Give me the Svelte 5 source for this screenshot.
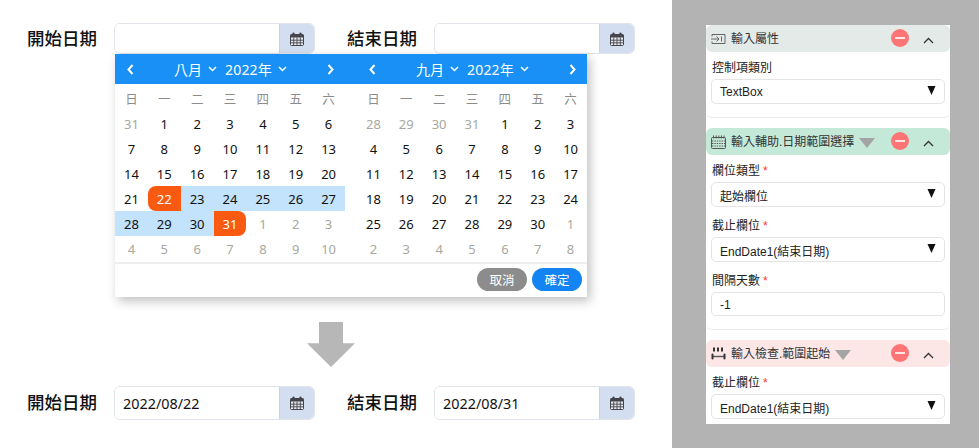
<script lang="ts">
  const weekdays = ['日', '一', '二', '三', '四', '五', '六'];

  // off = days from neighbouring months, start/end = picked range ends, range = between them
  function buildMonth(prevLast: number, lead: number, length: number, picks: Record<number, string> = {}) {
    const cells = [];
    for (let i = lead - 1; i >= 0; i--) cells.push({ day: prevLast - i, state: 'off' });
    for (let d = 1; d <= length; d++) cells.push({ day: d, state: picks[d] ?? '' });
    let next = 1;
    while (cells.length < 42) cells.push({ day: next++, state: 'off' });
    return cells;
  }

  const augPicks: Record<number, string> = { 22: 'start', 31: 'end' };
  for (let d = 23; d < 31; d++) augPicks[d] = 'range';

  const months = [
    { name: '八月', cells: buildMonth(31, 1, 31, augPicks) },
    { name: '九月', cells: buildMonth(31, 4, 30) }
  ];

  const sections = [
    {
      title: '輸入屬性',
      tone: 'grey',
      icon: 'input',
      fields: [{ label: '控制項類別', value: 'TextBox', kind: 'select' }]
    },
    {
      title: '輸入輔助.日期範圍選擇',
      tone: 'green',
      icon: 'calendar',
      filter: true,
      fields: [
        { label: '欄位類型', value: '起始欄位', kind: 'select', required: true },
        { label: '截止欄位', value: 'EndDate1(結束日期)', kind: 'select', required: true },
        { label: '間隔天數', value: '-1', kind: 'input', required: true }
      ]
    },
    {
      title: '輸入檢查.範圍起始',
      tone: 'pink',
      icon: 'check',
      filter: true,
      fields: [{ label: '截止欄位', value: 'EndDate1(結束日期)', kind: 'select', required: true }]
    }
  ];
</script>

{#snippet calIcon()}
  <svg viewBox="0 0 14 14" width="14" height="14" aria-hidden="true">
    <rect x="0.5" y="2.5" width="13" height="11" rx="1" fill="#e4eaf4" stroke="#45454a" />
    <rect x="0.5" y="2.5" width="13" height="3" fill="#45454a" />
    <rect x="2.5" y="0.5" width="2" height="3.5" rx="0.8" fill="#45454a" />
    <rect x="9.5" y="0.5" width="2" height="3.5" rx="0.8" fill="#45454a" />
    <path d="M1 8.2h12M1 10.8h12M3.7 5.5v8M7 5.5v8M10.3 5.5v8" stroke="#45454a" stroke-width="0.9" fill="none" />
  </svg>
{/snippet}

{#snippet dateField(value)}
  <div class="date">
    <input class="date__input" type="text" readonly {value} />
    <span class="date__addon">{@render calIcon()}</span>
  </div>
{/snippet}

{#snippet chevron()}
  <svg viewBox="0 0 9 6" width="9" height="6" fill="none" stroke="#fff" stroke-width="1.5" aria-hidden="true">
    <polyline points="1 1 4.5 4.5 8 1" />
  </svg>
{/snippet}

<div class="page">
  <div class="demo">
    <div class="row row--top">
      <span class="row__label">開始日期</span>
      {@render dateField('')}
      <span class="row__label row__label--end">結束日期</span>
      {@render dateField('')}
    </div>

    <div class="picker">
      <div class="picker__months">
        {#each months as month}
          <div class="month">
            <div class="month__head">
              <svg viewBox="0 0 7 11" width="7" height="11" fill="none" stroke="#fff" stroke-width="2" aria-hidden="true">
                <polyline points="5.5 1 1.5 5.5 5.5 10" />
              </svg>
              <div class="month__title">
                <span>{month.name}</span>{@render chevron()}
                <span class="month__year">2022年</span>{@render chevron()}
              </div>
              <svg viewBox="0 0 7 11" width="7" height="11" fill="none" stroke="#fff" stroke-width="2" aria-hidden="true">
                <polyline points="1.5 1 5.5 5.5 1.5 10" />
              </svg>
            </div>
            <div class="month__grid">
              {#each weekdays as w}
                <span class="cell cell--week">{w}</span>
              {/each}
              {#each month.cells as c}
                <span class="cell {c.state ? 'cell--' + c.state : ''}">{c.day}</span>
              {/each}
            </div>
          </div>
        {/each}
      </div>
      <div class="picker__foot">
        <button class="pill pill--cancel" type="button">取消</button>
        <button class="pill pill--ok" type="button">確定</button>
      </div>
    </div>

    <div class="arrow" aria-hidden="true"></div>

    <div class="row">
      <span class="row__label">開始日期</span>
      {@render dateField('2022/08/22')}
      <span class="row__label row__label--end">結束日期</span>
      {@render dateField('2022/08/31')}
    </div>
  </div>

  <div class="side">
    <div class="panel">
      {#each sections as s}
        <section class="card">
          <header class="card__head card__head--{s.tone}">
            <span class="card__icon">
              {#if s.icon === 'input'}
                <svg viewBox="0 0 15 12" width="15" height="12" fill="none" stroke="#666" stroke-width="1" aria-hidden="true">
                  <path d="M1 3.5V1.5h13v9H1V8.5" />
                  <path d="M0 6h8M5.5 3.5 8 6 5.5 8.5" />
                  <path d="M10.5 3.5v5" />
                </svg>
              {:else if s.icon === 'calendar'}
                <svg viewBox="0 0 15 14" width="15" height="14" fill="none" stroke="#555" stroke-width="1" aria-hidden="true">
                  <path d="M2.5 0.5v3M5.2 0.5v3M7.8 0.5v3M10.4 0.5v3M13 0.5v3" />
                  <rect x="0.5" y="2.5" width="14" height="11" rx="1" />
                  <path d="M1 6h13M1 8.5h13M1 11h13" stroke-dasharray="1.4 1" />
                </svg>
              {:else}
                <svg viewBox="0 0 15 13" width="15" height="13" fill="none" stroke="#333" stroke-width="2" aria-hidden="true">
                  <path d="M3 0.5v4M7 0.5v4M11 0.5v4" />
                  <path d="M2 9.5h11" stroke-width="1.4" stroke="#555" />
                  <path d="M1.5 7.5v4M13.5 7.5v4" stroke-linecap="round" />
                </svg>
              {/if}
            </span>
            <span class="card__title">{s.title}</span>
            {#if s.filter}
              <svg class="card__filter" viewBox="0 0 16 10" width="16" height="10" aria-hidden="true">
                <polygon points="0 0 16 0 8 10" fill="#a4a4a4" />
              </svg>
            {/if}
            <span class="card__remove" aria-hidden="true"></span>
            <svg class="card__fold" viewBox="0 0 11 7" width="11" height="7" fill="none" stroke="#333" stroke-width="1.3" aria-hidden="true">
              <polyline points="1 6 5.5 1.5 10 6" />
            </svg>
          </header>
          <div class="card__body">
            {#each s.fields as f}
              <div class="field">
                <div class="field__label">{f.label}{#if f.required}<span class="field__req">*</span>{/if}</div>
                <div class="field__control" class:field__control--input={f.kind === 'input'}>
                  <span>{f.value}</span>
                  {#if f.kind === 'select'}
                    <svg viewBox="0 0 8 9" width="9" height="9" aria-hidden="true">
                      <polygon points="0 0 8 0 4 9" fill="#111" />
                    </svg>
                  {/if}
                </div>
              </div>
            {/each}
          </div>
        </section>
      {/each}
    </div>
  </div>
</div>

<style>
  :global(body) {
    margin: 0;
    background: #fff;
  }

  .page {
    display: flex;
    width: 979px;
    height: 448px;
    overflow: hidden;
    font-family: "Noto Sans", "Noto Sans CJK TC", sans-serif;
    color: #111;
  }

  /* left: date picker demo */
  .demo {
    position: relative;
    width: 672px;
    flex-shrink: 0;
    padding: 23px 0 0 27px;
    box-sizing: border-box;
  }

  .row {
    display: flex;
    align-items: center;
    height: 34px;
  }

  .row--top {
    height: 31px;
  }

  .row--top .date {
    height: 31px;
  }

  .row__label {
    width: 87px;
    font-size: 17.5px;
    font-weight: 500;
    line-height: 28px;
    margin-top: -2px;
  }

  .row__label--end {
    margin-left: 32px;
  }

  .date {
    display: flex;
    width: 201px;
    height: 34px;
    box-sizing: border-box;
    border: 1px solid #e1e4ea;
    border-radius: 6px;
    overflow: hidden;
  }

  .date__input {
    flex: 1;
    min-width: 0;
    border: 0;
    outline: 0;
    padding: 0 0 0 8px;
    font-family: inherit;
    font-size: 14.4px;
    color: #111;
    background: #fff;
  }

  .date__addon {
    display: flex;
    align-items: center;
    justify-content: center;
    width: 35px;
    background: #d3dff0;
    border-left: 1px solid #c8d3e4;
    box-sizing: border-box;
  }

  .picker {
    position: absolute;
    left: 115px;
    top: 54px;
    width: 472px;
    height: 243px;
    background: #fff;
    box-shadow: 3px 4px 10px rgba(0, 0, 0, 0.25);
    display: flex;
    flex-direction: column;
  }

  .picker__months {
    display: flex;
    gap: 12px;
    background: linear-gradient(#1890f5 30px, transparent 30px);
  }

  .month {
    width: 230px;
  }

  .month__head {
    display: flex;
    align-items: center;
    justify-content: space-between;
    height: 30px;
    padding: 0 11px 0 12px;
    color: #fff;
    font-size: 14px;
  }

  .month__title {
    display: flex;
    align-items: center;
    gap: 6px;
  }

  .month__year {
    margin-left: 2px;
    letter-spacing: 0.2px;
  }

  .month__grid {
    display: grid;
    grid-template-columns: repeat(7, 1fr);
    grid-auto-rows: 25px;
    padding-top: 2px;
  }

  .cell {
    display: flex;
    align-items: center;
    justify-content: center;
    font-size: 13px;
    color: #111;
  }

  .cell--week {
    color: #8c8c8c;
    font-size: 12.5px;
  }

  .cell--off {
    color: #a8a8a0;
  }

  .cell--range {
    background: #c3e2fb;
  }

  .cell--start,
  .cell--end {
    background: #f85a12;
    color: #fff;
  }

  .cell--start {
    border-radius: 8px 0 0 8px;
  }

  .cell--end {
    border-radius: 0 8px 8px 0;
  }

  .picker__foot {
    flex: 1;
    display: flex;
    justify-content: flex-end;
    gap: 5px;
    margin-top: 1px;
    padding: 4px 5px 0 0;
    border-top: 2px solid #eeeeee;
  }

  .pill {
    width: 50px;
    height: 23px;
    border: 0;
    border-radius: 12px;
    padding: 0;
    color: #fff;
    font-family: inherit;
    font-size: 12.5px;
  }

  .pill--cancel {
    background: #8c8c8c;
  }

  .pill--ok {
    background: #1484f2;
  }

  .arrow {
    width: 48px;
    height: 45px;
    margin: 268px 0 19px 280px;
    background: #b7b7b7;
    clip-path: polygon(25% 0, 75% 0, 75% 47%, 100% 47%, 50% 100%, 0 47%, 25% 47%);
  }

  /* right: settings panel */
  .side {
    flex: 1;
    background: #b3b3b3;
    padding: 25px 0 0 34px;
  }

  .panel {
    display: flex;
    flex-direction: column;
    gap: 10px;
    width: 244px;
    height: 399px;
    overflow: hidden;
    background: #fff;
    font-family: "Liberation Sans", "Noto Sans CJK TC", sans-serif;
    font-size: 12px;
    color: #222;
  }

  .card {
    flex-shrink: 0;
    padding-bottom: 13px;
    border-bottom: 1px solid #ececec;
    border-radius: 0 0 6px 6px;
  }

  .card__head {
    display: flex;
    align-items: center;
    height: 27px;
    padding-left: 5px;
    border-radius: 6px;
    color: #333;
  }

  .card__head--grey {
    background: #e3eae8;
  }

  .card__head--green {
    background: #c4e9d8;
  }

  .card__head--pink {
    background: #fde6e6;
  }

  .card__icon {
    display: flex;
    width: 20px;
  }

  .card__title {
    margin-top: -2px;
  }

  .card__filter {
    margin: 2px 0 0 5px;
  }

  .card__remove {
    position: relative;
    width: 18px;
    height: 18px;
    margin: -2px 0 0 auto;
    border-radius: 50%;
    background: #ff7575;
  }

  .card__remove::after {
    content: "";
    position: absolute;
    left: 4px;
    right: 4px;
    top: 8px;
    height: 2px;
    background: #ffe6e6;
  }

  .card__fold {
    margin: 3px 16px 0 14px;
  }

  .card__body {
    display: flex;
    flex-direction: column;
    gap: 10px;
    padding: 7px 5px 0;
  }

  .field__label {
    height: 18px;
    line-height: 19px;
    margin: 0 0 2px 1px;
    color: #222;
  }

  .field__req {
    margin-left: 3px;
    color: #f33;
  }

  .field__control {
    display: flex;
    align-items: center;
    justify-content: space-between;
    height: 25px;
    box-sizing: border-box;
    padding: 1px 8px 0;
    border: 1px solid #e4e4e4;
    border-radius: 5px;
    color: #222;
  }

  .field__control--input {
    height: 24px;
  }

  .field__control svg {
    margin-top: -4px;
  }
</style>
